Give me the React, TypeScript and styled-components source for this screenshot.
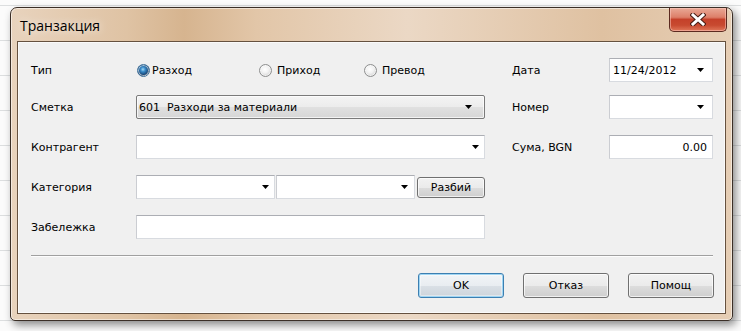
import React from 'react';
import styled, { createGlobalStyle } from 'styled-components';

const Global = createGlobalStyle`
  html, body { margin: 0; padding: 0; }
  body {
    width: 741px; height: 331px; overflow: hidden;
    font-family: "DejaVu Sans", "Liberation Sans", sans-serif;
    background: #fff;
  }
`;

const Desktop = styled.div`
  width: 741px;
  height: 331px;
  box-sizing: border-box;
  padding: 7px 0 0 10px;
  background-color: #fbfbfb;
  background-image: repeating-linear-gradient(to bottom, transparent 0 5px, #dcdedf 5px 6px, transparent 6px 35px);
`;

const Window = styled.div`
  width: 723px;
  height: 314px;
  box-sizing: border-box;
  display: flex;
  flex-direction: column;
  padding: 0 6px 6px 6px;
  border: 1px solid #3b2f27;
  border-radius: 7px 7px 5px 5px;
  background: linear-gradient(to right, #e8d3bd 0%, #dfc3a4 16%, #d6b48f 24%, #e2c6a8 34%, #ebd8c5 55%, #dfc1a1 82%, #e6ceb5 100%);
  box-shadow: 3px 4px 9px rgba(0, 0, 0, 0.45), inset 0 0 0 1px rgba(255, 255, 255, 0.5);
`;

const TitleBar = styled.div`
  height: 33px;
  flex: none;
  display: flex;
  justify-content: space-between;
  align-items: flex-start;
  padding-left: 3px;
`;

const Title = styled.div`
  align-self: center;
  margin-top: 1px;
  font-family: "Open Sans", "Noto Sans", sans-serif;
  font-size: 14px;
  color: #000;
  text-shadow: 0 0 8px rgba(255, 255, 255, 0.9);
`;

const CloseButton = styled.div`
  width: 58px;
  height: 24px;
  margin-right: -1px;
  box-sizing: border-box;
  display: flex;
  align-items: center;
  justify-content: center;
  border: 1px solid #5c2a20;
  border-top: none;
  border-radius: 0 0 5px 5px;
  background: linear-gradient(to bottom, #e9a996 0%, #dd7f69 40%, #c5412a 50%, #c84a30 75%, #e0775a 100%);
  box-shadow: inset 0 0 0 1px rgba(255, 210, 200, 0.5);
`;

const Client = styled.div`
  flex: 1;
  display: flex;
  flex-direction: column;
  box-sizing: border-box;
  border: 1px solid #65513f;
  background: #f0f0f0;
  box-shadow: inset 0 0 0 1px #fafafa;
  padding: 16px 0 0 0;
`;

const Form = styled.div`
  display: flex;
  flex-direction: column;
  padding-left: 13px;
`;

const Row = styled.div<{ $top: number }>`
  display: flex;
  align-items: center;
  height: 24px;
  margin-top: ${p => p.$top}px;
`;

const Label = styled.div<{ $w: number }>`
  width: ${p => p.$w}px;
  flex: none;
  font-size: 11px;
  color: #000;
`;

const Field = styled.div`
  width: 349px;
  flex: none;
  display: flex;
  align-items: center;
`;

const Spacer = styled.div`
  width: 27px;
  flex: none;
`;

const Box = styled.div<{ $w: number; $pr: number; $align?: string; $h?: number }>`
  width: ${p => p.$w}px;
  height: ${p => p.$h ?? 24}px;
  flex: none;
  box-sizing: border-box;
  display: flex;
  align-items: center;
  justify-content: ${p => p.$align ?? 'space-between'};
  padding: 0 ${p => p.$pr}px 0 3px;
  background: #fff;
  border: 1px solid #d8dbe0;
  border-top-color: #acaeb4;
  border-left-color: #cbcdd2;
  font-size: 11px;
  color: #000;
`;

const ReadOnlyCombo = styled.div<{ $pr: number }>`
  width: 349px;
  height: 24px;
  box-sizing: border-box;
  display: flex;
  align-items: center;
  justify-content: space-between;
  padding: 0 ${p => p.$pr}px 0 2px;
  border: 1px solid #7a7a7a;
  border-radius: 2px;
  background: linear-gradient(to bottom, #f4f4f4 0%, #ececec 50%, #e0e0e0 52%, #d6d6d6 100%);
  box-shadow: inset 0 0 0 1px rgba(255, 255, 255, 0.7);
  font-size: 11px;
  color: #000;
  white-space: pre;
`;

const RadioGroup = styled.div`
  display: flex;
  align-items: center;
  padding-left: 1px;
`;

const RadioItem = styled.div<{ $w: number; $gap: number }>`
  width: ${p => p.$w}px;
  display: flex;
  align-items: center;
  gap: ${p => p.$gap}px;
  font-size: 11px;
  color: #000;
`;

const RadioCircle = styled.span<{ $on?: boolean }>`
  width: 13px;
  height: 13px;
  box-sizing: border-box;
  border-radius: 50%;
  border: 1px solid ${p => (p.$on ? '#3d6f99' : '#8e8f8f')};
  background: ${p =>
    p.$on
      ? 'radial-gradient(circle at 45% 40%, #a6dbf7 0, #3b8cc9 25%, #1b4f82 55%, #0e2a4d 70%, #e8e8e8 72%, #ffffff 100%)'
      : 'radial-gradient(circle at 45% 40%, #ffffff 0, #f2f2f2 40%, #d4d4d4 75%, #bdbdbd 100%)'};
  box-shadow: inset 0 0 0 1px rgba(255, 255, 255, 0.6);
`;

const SmallButton = styled.div`
  width: 68px;
  height: 21px;
  margin-left: 2px;
  box-sizing: border-box;
  display: flex;
  align-items: center;
  justify-content: center;
  border: 1px solid #707070;
  border-radius: 3px;
  background: linear-gradient(to bottom, #f2f2f2 0%, #ebebeb 50%, #dddddd 51%, #cfcfcf 100%);
  box-shadow: inset 0 0 0 1px rgba(255, 255, 255, 0.7);
  font-size: 11px;
  color: #000;
`;

const Gap = styled.div<{ $w: number }>`
  width: ${p => p.$w}px;
  flex: none;
`;

const Separator = styled.div`
  margin: 16px 12px 0 13px;
  height: 0;
  border-top: 1px solid #a0a0a0;
  border-bottom: 1px solid #fdfdfd;
`;

const ButtonRow = styled.div`
  display: flex;
  justify-content: flex-end;
  gap: 19px;
  padding: 16px 11px 0 0;
`;

const DialogButton = styled.div<{ $default?: boolean }>`
  width: 86px;
  height: 25px;
  box-sizing: border-box;
  display: flex;
  align-items: center;
  justify-content: center;
  border: 1px solid ${p => (p.$default ? '#3c7fb1' : '#707070')};
  border-radius: 3px;
  background: ${p =>
    p.$default
      ? 'linear-gradient(to bottom, #f1f4f7 0%, #e9edf1 50%, #dae0e6 51%, #cdd4db 100%)'
      : 'linear-gradient(to bottom, #f2f2f2 0%, #ebebeb 50%, #dddddd 51%, #cfcfcf 100%)'};
  box-shadow: ${p =>
    p.$default
      ? 'inset 0 0 0 1px #9fd5f3, inset 0 0 0 2px rgba(255,255,255,0.4)'
      : 'inset 0 0 0 1px rgba(255,255,255,0.7)'};
  font-size: 11px;
  color: #000;
`;

const Arrow = () => (
  <svg width="7" height="4" viewBox="0 0 7 4" style={{ flex: 'none' }}>
    <polygon points="0,0 7,0 3.5,4" fill="#000" />
  </svg>
);

const CloseGlyph = () => (
  <svg width="16" height="13" viewBox="0 0 16 13">
    <path d="M3 2 L13 11 M13 2 L3 11" stroke="#4a1d14" strokeWidth="5" strokeLinecap="square" />
    <path d="M3 2 L13 11 M13 2 L3 11" stroke="#ffffff" strokeWidth="3" strokeLinecap="square" />
  </svg>
);

export default function App() {
  return (
    <>
      <Global />
      <Desktop>
        <Window>
          <TitleBar>
            <Title>Транзакция</Title>
            <CloseButton>
              <CloseGlyph />
            </CloseButton>
          </TitleBar>
          <Client>
            <Form>
              <Row $top={0}>
                <Label $w={105}>Тип</Label>
                <Field>
                  <RadioGroup>
                    <RadioItem $w={122} $gap={2}>
                      <RadioCircle $on />
                      Разход
                    </RadioItem>
                    <RadioItem $w={105} $gap={5}>
                      <RadioCircle />
                      Приход
                    </RadioItem>
                    <RadioItem $w={100} $gap={5}>
                      <RadioCircle />
                      Превод
                    </RadioItem>
                  </RadioGroup>
                </Field>
                <Spacer />
                <Label $w={97}>Дата</Label>
                <Box $w={104} $pr={8}>
                  11/24/2012
                  <Arrow />
                </Box>
              </Row>
              <Row $top={13}>
                <Label $w={105}>Сметка</Label>
                <Field>
                  <ReadOnlyCombo $pr={12}>
                    {'601  Разходи за материали'}
                    <Arrow />
                  </ReadOnlyCombo>
                </Field>
                <Spacer />
                <Label $w={97}>Номер</Label>
                <Box $w={104} $pr={8}>
                  <span />
                  <Arrow />
                </Box>
              </Row>
              <Row $top={16}>
                <Label $w={105}>Контрагент</Label>
                <Field>
                  <Box $w={349} $pr={5}>
                    <span />
                    <Arrow />
                  </Box>
                </Field>
                <Spacer />
                <Label $w={97}>Сума, BGN</Label>
                <Box $w={104} $pr={5} $align="flex-end">
                  0.00
                </Box>
              </Row>
              <Row $top={16}>
                <Label $w={105}>Категория</Label>
                <Field>
                  <Box $w={139} $pr={5}>
                    <span />
                    <Arrow />
                  </Box>
                  <Gap $w={1} />
                  <Box $w={139} $pr={6}>
                    <span />
                    <Arrow />
                  </Box>
                  <SmallButton>Разбий</SmallButton>
                </Field>
              </Row>
              <Row $top={16}>
                <Label $w={105}>Забележка</Label>
                <Field>
                  <Box $w={349} $pr={5}>
                    <span />
                  </Box>
                </Field>
              </Row>
            </Form>
            <Separator />
            <ButtonRow>
              <DialogButton $default>OK</DialogButton>
              <DialogButton>Отказ</DialogButton>
              <DialogButton>Помощ</DialogButton>
            </ButtonRow>
          </Client>
        </Window>
      </Desktop>
    </>
  );
}
